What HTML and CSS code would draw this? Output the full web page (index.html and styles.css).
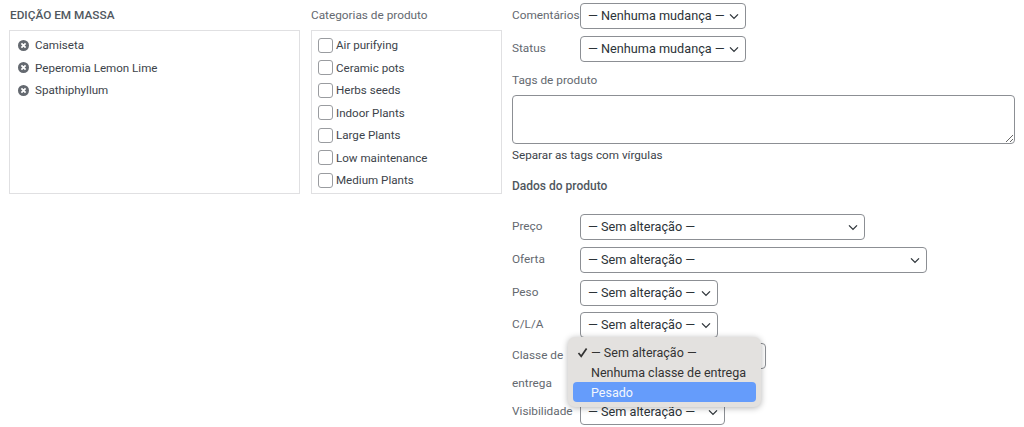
FILE: index.html
```html
<!doctype html>
<html lang="pt">
<head>
<meta charset="utf-8">
<title>Edição em massa</title>
<link rel="stylesheet" href="styles.css">
</head>
<body>
	<svg width="0" height="0" class="defs">
		<symbol id="chev" viewBox="0 0 10 7"><path d="M1 1.4 5 5.4l4-4" fill="none" stroke="currentColor" stroke-width="1.3"/></symbol>
		<symbol id="del" viewBox="0 0 12 12"><circle cx="6" cy="6" r="6" fill="#646970"/><path d="M3.7 3.7l4.6 4.6M8.3 3.7 3.7 8.3" stroke="#fff" stroke-width="1.9"/></symbol>
	</svg>
	<div id="wrap">
		<div class="col col-left">
			<div class="col-title strong">EDIÇÃO EM MASSA</div>
			<ul class="box">
				<li><svg class="del"><use href="#del"/></svg>Camiseta</li>
				<li><svg class="del"><use href="#del"/></svg>Peperomia Lemon Lime</li>
				<li><svg class="del"><use href="#del"/></svg>Spathiphyllum</li>
			</ul>
		</div>
		<div class="col col-mid">
			<div class="col-title">Categorias de produto</div>
			<ul class="box box-cats">
				<li><span class="check"></span>Air purifying</li>
				<li><span class="check"></span>Ceramic pots</li>
				<li><span class="check"></span>Herbs seeds</li>
				<li><span class="check"></span>Indoor Plants</li>
				<li><span class="check"></span>Large Plants</li>
				<li><span class="check"></span>Low maintenance</li>
				<li><span class="check"></span>Medium Plants</li>
			</ul>
		</div>
		<div class="col col-right">
			<div class="row">
				<span class="lbl">Comentários</span>
				<div class="sel w-change">— Nenhuma mudança —<svg class="chev"><use href="#chev"/></svg></div>
			</div>
			<div class="row">
				<span class="lbl">Status</span>
				<div class="sel w-change">— Nenhuma mudança —<svg class="chev"><use href="#chev"/></svg></div>
			</div>
			<div class="tags-title">Tags de produto</div>
			<textarea class="tags"></textarea>
			<div class="hint">Separar as tags com vírgulas</div>
			<div class="data-title strong">Dados do produto</div>
			<div class="row">
				<span class="lbl">Preço</span>
				<div class="sel w-price">— Sem alteração —<svg class="chev"><use href="#chev"/></svg></div>
			</div>
			<div class="row">
				<span class="lbl">Oferta</span>
				<div class="sel w-sale">— Sem alteração —<svg class="chev"><use href="#chev"/></svg></div>
			</div>
			<div class="row row-tight">
				<span class="lbl">Peso</span>
				<div class="sel w-small">— Sem alteração —<svg class="chev"><use href="#chev"/></svg></div>
			</div>
			<div class="row row-cla">
				<span class="lbl">C/L/A</span>
				<div class="sel w-small">— Sem alteração —<svg class="chev"><use href="#chev"/></svg></div>
			</div>
			<div class="row row-class">
				<span class="lbl">Classe de entrega</span>
				<div class="sel w-class"></div>
			</div>
			<div class="row">
				<span class="lbl">Visibilidade</span>
				<div class="sel w-vis">— Sem alteração —<svg class="chev"><use href="#chev"/></svg></div>
			</div>
		</div>
		<ul class="menu">
			<li class="on"><svg class="tick" viewBox="0 0 11 11"><path d="M1.5 6 4.2 9.3 9.6 1.4" fill="none" stroke="currentColor" stroke-width="1.7"/></svg>— Sem alteração —</li>
			<li>Nenhuma classe de entrega</li>
			<li class="active">Pesado</li>
		</ul>
	</div>
</body>
</html>
```

FILE: styles.css
```css
html,
body {
	margin: 0;
	height: 427px;
	overflow: hidden;
	background: #fff;
}
body {
	font: 12.7px/20px Roboto, "Liberation Sans", sans-serif;
	color: #50575e;
}
ul {
	list-style: none;
	margin: 0;
	padding: 0;
}
.defs {
	position: absolute;
}
#wrap {
	position: relative;
	display: flex;
	gap: 11px;
	padding: 3px 0 0 9px;
}
.strong {
	font-weight: 500;
}
.col-left {
	width: 291px;
}
.col-mid {
	width: 191px;
	margin-right: -1px;
}
.col-right {
	width: 503px;
}
.col-title {
	height: 27px;
	line-height: 24px;
	font-size: 11.8px;
	color: #646970;
}
.col-title.strong {
	color: #50575e;
	padding-left: 1px;
}
.box {
	box-sizing: border-box;
	height: 164px;
	padding: 3px 0 0 8px;
	border: 1px solid #e0e0e2;
	color: #3c434a;
	font-size: 11.6px;
}
.box-cats {
	padding-left: 6px;
}
.box li {
	display: flex;
	align-items: center;
	height: 22.5px;
}
.del {
	width: 11px;
	height: 11px;
	margin-right: 6px;
}
.check {
	box-sizing: border-box;
	width: 15px;
	height: 15px;
	margin-right: 3px;
	border: 1px solid #9a9ca0;
	border-radius: 3px;
}
.row {
	display: flex;
	align-items: flex-start;
	margin-bottom: 7px;
}
.row-tight {
	margin-bottom: 6px;
}
.row-cla {
	margin-bottom: 5px;
}
.row-class {
	margin-bottom: 2px;
}
.lbl {
	width: 68px;
	flex: none;
	margin-top: -2px;
	line-height: 28px;
	font-size: 11.8px;
	color: #646970;
}
.sel {
	box-sizing: border-box;
	display: flex;
	align-items: center;
	justify-content: space-between;
	height: 26px;
	padding: 0 6px 0 7px;
	border: 1px solid #8c8f94;
	border-radius: 4px;
	background: #fff;
	color: #2c3338;
	white-space: nowrap;
}
.chev {
	width: 10px;
	height: 7px;
	flex: none;
}
.w-change {
	width: 166px;
}
.w-price {
	width: 285px;
}
.w-sale {
	width: 347px;
}
.w-small {
	width: 138px;
}
.w-class {
	width: 186px;
}
.w-vis {
	width: 145px;
}
.tags-title {
	margin-top: 1px;
	height: 26px;
	line-height: 22px;
	font-size: 11.8px;
	color: #646970;
}
.tags {
	display: block;
	box-sizing: border-box;
	width: 503px;
	height: 49px;
	margin: 0;
	border: 1px solid #8c8f94;
	border-radius: 4px;
	background: #fff;
}
.hint {
	margin-top: 1px;
	line-height: 20px;
	font-size: 11.7px;
	color: #3c434a;
}
.data-title {
	margin: 11px 0 18px;
	line-height: 20px;
	font-size: 12px;
	color: #50575e;
}
.menu {
	position: absolute;
	left: 568px;
	top: 337px;
	box-sizing: border-box;
	width: 193px;
	height: 70px;
	padding: 5px;
	border-radius: 7px;
	background: #e3e1df;
	box-shadow: 0 1px 6px rgba(0, 0, 0, .3);
	color: #333;
	font-size: 12.5px;
}
.menu li {
	position: relative;
	height: 20px;
	line-height: 21px;
	padding-left: 18px;
	border-radius: 4px;
	white-space: nowrap;
}
.menu .active {
	background: #659cfb;
	color: #f4f7fd;
}
.tick {
	position: absolute;
	left: 4px;
	top: 5px;
	width: 11px;
	height: 11px;
}
```
